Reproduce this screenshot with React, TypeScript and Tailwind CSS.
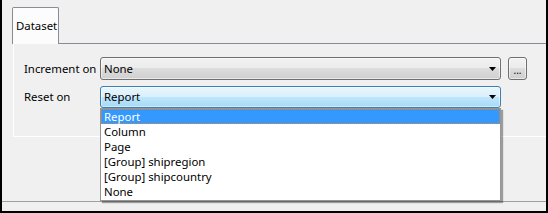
import React from "react";

const Arrow = () => (
  <svg width="7" height="4" viewBox="0 0 7 4" className="block">
    <path d="M0 0H7L3.5 4Z" fill="#000" />
  </svg>
);

export default function App() {
  const items = ["Report", "Column", "Page", "[Group] shipregion", "[Group] shipcountry", "None"];
  return (
    <div
      className="relative w-[548px] h-[213px] overflow-hidden bg-[#f0f0f0] border-r-2 border-b-2 border-l-2 border-black text-[11.4px] text-black whitespace-nowrap"
      style={{ fontFamily: '"Noto Sans", "Open Sans", sans-serif' }}
    >
      {/* tab strip */}
      <div className="flex h-[44px] pt-[7px]">
        <div className="w-[10px] border-b border-transparent" />
        <div className="w-[47px] h-[37px] border border-b-0 border-[#898c95] rounded-t-[2px] bg-[#fcfcfc] pl-[3px] pt-[11px] leading-[14px]">
          Dataset
        </div>
        <div className="flex-1 border-b border-[#898c95]" />
      </div>
      {/* panel */}
      <div className="ml-[11px] h-[93px] border-l border-b border-white pt-[13px] pl-[10px] flex flex-col gap-[6px]">
        <div className="flex items-center h-[23px]">
          <div className="w-[76px] leading-[14px]">Increment on</div>
          <div className="w-[401px] h-[23px] border border-[#707070] rounded-[3px] bg-[linear-gradient(to_bottom,#f2f2f2_0%,#ebebeb_50%,#dddddd_50%,#cfcfcf_100%)] shadow-[inset_0_0_0_1px_rgba(255,255,255,0.55)] flex items-center justify-between pl-[3px] pr-[4px]">
            <span className="leading-[14px]">None</span>
            <Arrow />
          </div>
          <div className="ml-[7px] w-[19px] h-[23px] border border-[#707070] rounded-[3px] bg-[linear-gradient(to_bottom,#f2f2f2_0%,#ebebeb_50%,#dddddd_50%,#cfcfcf_100%)] shadow-[inset_0_0_0_1px_rgba(255,255,255,0.55)] flex items-end justify-center pb-[4px] leading-[10px] text-[10px]">
            ...
          </div>
        </div>
        <div className="flex items-center h-[22px]">
          <div className="w-[76px] leading-[14px]">Reset on</div>
          <div className="w-[401px] h-[22px] border border-[#3c7fb1] rounded-[3px] bg-[linear-gradient(to_bottom,#eaf6fd_0%,#d9f0fc_50%,#bee6fd_50%,#a7d9f5_100%)] shadow-[inset_0_0_0_1px_rgba(255,255,255,0.5)] flex items-center justify-between pl-[3px] pr-[4px]">
            <span className="leading-[14px]">Report</span>
            <Arrow />
          </div>
        </div>
      </div>
      {/* bottom separator */}
      <div className="mt-[64px] border-t border-[#a0a0a0] h-px" />
      {/* dropdown list */}
      <div className="absolute left-[98px] top-[108px] w-[401px] h-[93px] border border-[#969696] bg-white shadow-[2px_2px_1px_rgba(0,0,0,0.35)]">
        {items.map((it, i) => (
          <div
            key={it}
            className={
              i === 0
                ? "h-[15px] leading-[13px] pl-[2px] bg-[#3399ff] text-white border border-dotted border-[#e8822a]"
                : "h-[15px] leading-[15px] pl-[3px]"
            }
          >
            {it}
          </div>
        ))}
      </div>
    </div>
  );
}
